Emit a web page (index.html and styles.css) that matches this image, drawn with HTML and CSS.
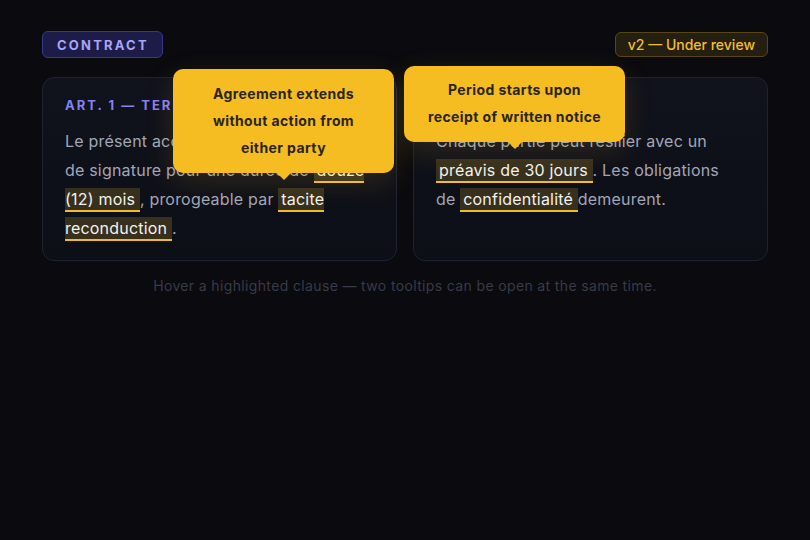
FILE: index.html
```html
<!DOCTYPE html>
<html lang="fr">
<head>
<meta charset="utf-8">
<link rel="stylesheet" href="styles.css">
</head>
<body>
<div class="page">
  <header class="top">
    <span class="tag">CONTRACT</span>
    <span class="status">v2 — Under review</span>
  </header>
  <section class="cards">
    <article class="card">
      <h2 class="art">ART. 1 — TERME</h2>
      <p class="body">Le présent accord prend effet à la date de signature pour une durée de <mark class="hl">douze (12) mois </mark>, prorogeable par <mark class="hl">tacite reconduction </mark>.</p>
      <div class="tip tip-one">Agreement extends without action from either party</div>
    </article>
    <article class="card">
      <h2 class="art">ART. 2 — RÉSILIATION</h2>
      <p class="body">Chaque partie peut résilier avec un <mark class="hl">préavis de 30 jours </mark>. Les obligations de <mark class="hl">confidentialité </mark> demeurent.</p>
      <div class="tip tip-two">Period starts upon receipt of written notice</div>
    </article>
  </section>
  <p class="hint">Hover a highlighted clause — two tooltips can be open at the same time.</p>
</div>
</body>
</html>
```
FILE: styles.css
```css
* { box-sizing: border-box; }
html, body { margin: 0; padding: 0; }
body {
  background: #0a0a0f;
  font-family: Inter, "Noto Sans", "Liberation Sans", sans-serif;
  width: 810px;
  height: 540px;
  overflow: hidden;
}
.page {
  padding: 31px 42px 0 42px;
}
.top {
  display: flex;
  justify-content: space-between;
  align-items: center;
  height: 27px;
}
.tag {
  display: inline-flex;
  align-items: center;
  height: 27px;
  padding: 0 13px 0 14px;
  background: #1d1c48;
  border: 1px solid #3a3888;
  border-radius: 6px;
  color: #a7a5f7;
  font-size: 13px;
  font-weight: 700;
  letter-spacing: 2.2px;
}
.status {
  display: inline-flex;
  align-items: center;
  height: 25px;
  padding: 0 12px;
  background: #241f10;
  border: 1px solid #574717;
  border-radius: 6px;
  color: #f3bf2c;
  font-size: 14px;
  font-weight: 500;
}
.cards {
  display: grid;
  grid-template-columns: 1fr 1fr;
  gap: 16px;
  margin-top: 19px;
}
.card {
  position: relative;
  height: 184px;
  padding: 19px 25px 18px 22px;
  background: linear-gradient(180deg, #10121c 0%, #0d0f17 100%);
  border: 1px solid #1f2233;
  border-radius: 12px;
}
.art {
  margin: 0;
  font-size: 13px;
  line-height: 16px;
  font-weight: 700;
  letter-spacing: 2px;
  color: #8582ee;
}
.body {
  margin: 14px 0 0 0;
  font-size: 16px;
  line-height: 29px;
  letter-spacing: 0.2px;
  color: #a2a6b6;
}
.hl {
  background: #37301e;
  color: #f4f2ec;
  border-bottom: 2px solid #f2bc28;
  padding: 1px 0 1px 3px;
}
.tip {
  position: absolute;
  width: 221px;
  padding: 11px 19px 12px 19px;
  background: #f6bd22;
  color: #2a2416;
  border-radius: 10px;
  font-size: 14px;
  font-weight: 700;
  line-height: 27px;
  letter-spacing: 0.4px;
  text-align: center;
  box-shadow: 0 8px 30px rgba(246, 189, 34, 0.14);
}
.tip::after {
  content: "";
  position: absolute;
  left: 50%;
  bottom: -7px;
  margin-left: -7px;
  border-left: 7px solid transparent;
  border-right: 7px solid transparent;
  border-top: 7px solid #f6bd22;
}
.tip-one {
  left: 130px;
  top: -9px;
}
.tip-two {
  left: -10px;
  top: -12px;
  padding-top: 10px;
}
.hint {
  margin: 16px 0 0 0;
  text-align: center;
  font-size: 14px;
  line-height: 18px;
  letter-spacing: 0.36px;
  color: #393b48;
}
```
